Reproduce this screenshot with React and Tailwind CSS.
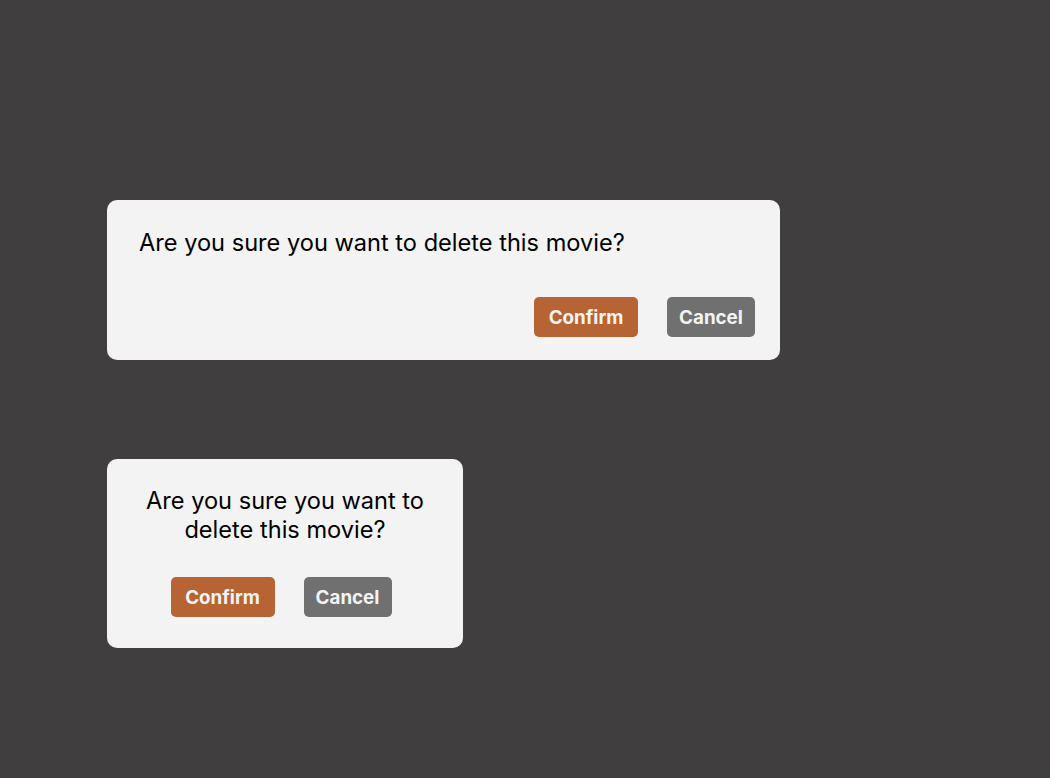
import React from "react";

const font = { fontFamily: "Inter, 'Noto Sans', sans-serif" };

function Buttons({ className = "" }) {
  return (
    <div className={`flex gap-[29px] ${className}`}>
      <button className="h-10 w-[104px] rounded-[5px] bg-[#b76434] pt-0.5 text-[18.8px] font-bold text-[#f3f3f3]">
        Confirm
      </button>
      <button className="h-10 w-[88px] rounded-[5px] bg-[#707070] pt-0.5 text-[18.8px] font-bold text-[#f3f3f3]">
        Cancel
      </button>
    </div>
  );
}

export default function App() {
  return (
    <div
      className="min-h-[778px] w-full bg-[#413e3f] pl-[107px] pt-[200px]"
      style={font}
    >
      <div className="flex flex-col gap-[99px]">
        <div className="flex h-[160px] w-[673px] flex-col rounded-[10px] bg-[#f3f3f3] pl-8 pr-[25px] pt-[27px] pb-[23px]">
          <p className="text-[23.6px] leading-8 text-black">
            Are you sure you want to delete this movie?
          </p>
          <Buttons className="mt-auto justify-end" />
        </div>

        <div className="flex h-[189px] w-[356px] flex-col items-center rounded-[10px] bg-[#f3f3f3] px-6 pt-[28px]">
          <p className="text-center text-[23.6px] leading-[28.5px] text-black">
            Are you sure you want to
            <br />
            delete this movie?
          </p>
          <Buttons className="mt-[33px] -ml-2" />
        </div>
      </div>
    </div>
  );
}
